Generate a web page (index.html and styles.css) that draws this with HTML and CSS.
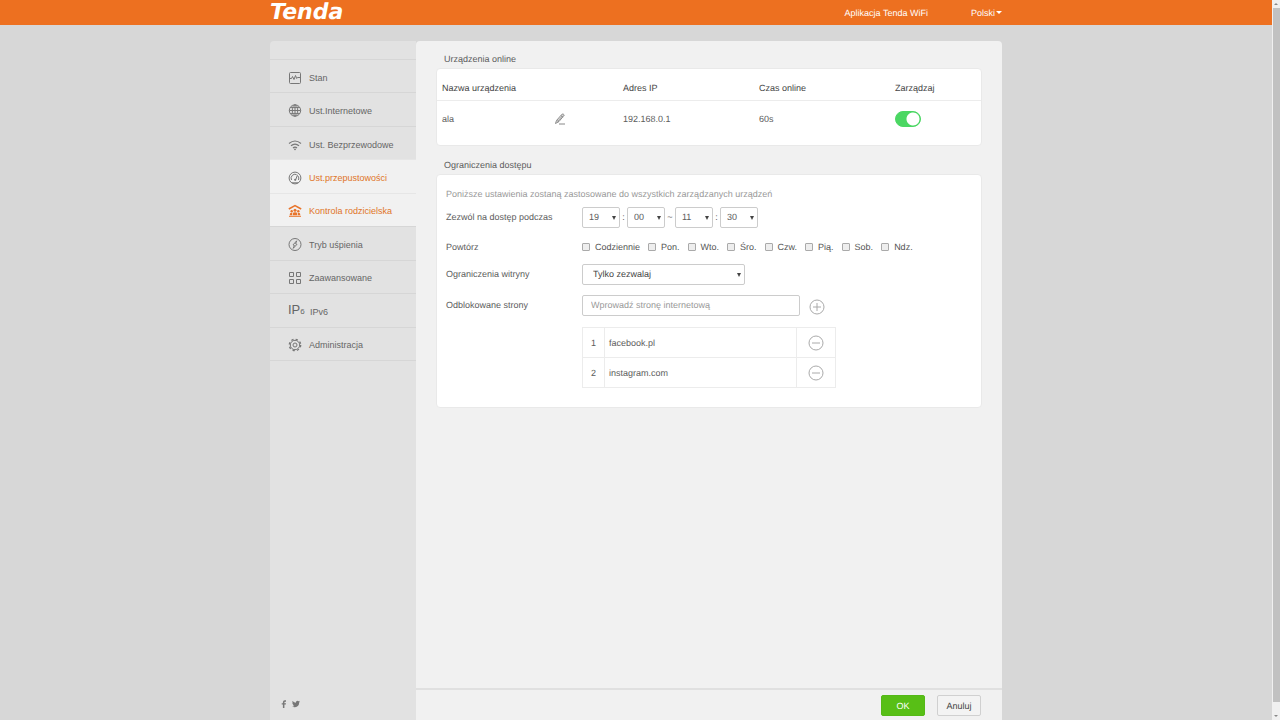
FILE: index.html
```html
<!DOCTYPE html>
<html lang="pl">
<head>
<meta charset="utf-8">
<title>Tenda – Kontrola rodzicielska</title>
<link rel="stylesheet" href="styles.css">
</head>
<body>
<div class="page">
  <header class="topbar">
    <div class="wrap topbar-inner">
      <a class="logo" href="#">Tenda</a>
      <a class="top-link" href="#">Aplikacja Tenda WiFi</a>
      <button class="lang" type="button">Polski<span class="caret"></span></button>
    </div>
  </header>
  <div class="wrap shell">
    <aside class="sidebar">
      <nav class="menu">
        <a class="item" href="#"><svg class="icon" viewBox="0 0 14 14"><rect x="1.500" y="1.500" width="11" height="11" rx="1"/><path d="M1.500 7.500h2l1-2 1.500 3 1.500-4 1.200 3 .8-1h3"/></svg>Stan</a>
        <a class="item" href="#"><svg class="icon" viewBox="0 0 14 14"><circle cx="7" cy="6.500" r="5.700"/><ellipse cx="7" cy="6.500" rx="2.700" ry="5.700"/><path d="M7 .8v11.400M1.300 6.500h11.400M2.200 3.600h9.600M2.200 9.400h9.600"/></svg>Ust.Internetowe</a>
        <a class="item" href="#"><svg class="icon" viewBox="0 0 14 14"><path d="M1 5.500q6-5 12 0M3 7.800q4-3.400 8 0M5 10q2-1.800 4 0" stroke-width="1.200"/><circle class="solid" cx="7" cy="11.300" r=".9"/></svg>Ust. Bezprzewodowe</a>
        <a class="item active" href="#"><svg class="icon dim" viewBox="0 0 14 14"><path d="M4 11.800h6"/><circle cx="7" cy="7" r="5.900"/><path d="M3.500 9A4 4 0 0 1 8.500 3.500M10 5a4 4 0 0 1 .5 4"/><path d="M9.500 3.800 7.800 8.500"/><circle class="solid" cx="7.200" cy="8.800" r="1.100"/></svg>Ust.przepustowości</a>
        <a class="item active" href="#"><svg class="icon" viewBox="0 0 14 14"><path d="M.8 5 7 1.700 13.200 5" stroke-width="1.500"/><g class="solid"><circle cx="7" cy="6.300" r="1.500"/><circle cx="3.700" cy="7.300" r="1.200"/><circle cx="10.300" cy="7.300" r="1.200"/><path d="M4.900 11.200V9.500q0-1.300 2.100-1.300t2.100 1.300v1.700zM1.800 11.200V9.900q0-1.100 2.400-1.100v2.400zM12.200 11.200V9.900q0-1.100-2.400-1.100v2.400z"/></g><path d="M1 12.300h12"/></svg>Kontrola rodzicielska</a>
        <a class="item" href="#"><svg class="icon" viewBox="0 0 14 14"><circle cx="7" cy="6.500" r="6"/><path d="M8.700 2.800 5 6.900l1.400.5-1.200 3L9 6.300l-1.400-.5z"/></svg>Tryb uśpienia</a>
        <a class="item" href="#"><svg class="icon" viewBox="0 0 14 14"><path d="M1.500 1.500h4v4h-4zM8.500 1.500h4v4h-4zM1.500 8.500h4v4h-4zM8.500 8.500h4v4h-4z"/></svg>Zaawansowane</a>
        <a class="item" href="#"><span class="ip-icon">IP<small>6</small></span>IPv6</a>
        <a class="item" href="#"><svg class="icon" viewBox="0 0 14 14"><circle cx="7" cy="7" r="2"/><circle cx="7" cy="7" r="4.700"/><circle cx="7" cy="7" r="5.700" stroke-width="1.300" stroke-dasharray="2.240 2.240"/></svg>Administracja</a>
      </nav>
      <div class="social">
        <a href="#" aria-label="Facebook"><svg viewBox="0 0 8 8"><path d="M6 .3v1.500H5q-.6 0-.6.600v.9H6L5.800 4.600H4.400V8H2.900V4.600H1.700V3.300h1.200V2.200Q2.900.3 4.800.3z"/></svg></a>
        <a href="#" aria-label="Twitter"><svg viewBox="0 0 8 8"><path d="M8 1.600l-.8.8Q7.200 5 5.500 6.300 3 8 0 6.600q1.400 0 2.300-.7Q1.200 5.700.9 4.700h.6Q.3 4.200.3 3l.6.200Q-.1 2.300.6 1.100 2 2.800 3.900 2.800 3.800.8 5.500.700q.8 0 1.200.5l1-.4-.6.9z"/></svg></a>
      </div>
    </aside>
    <main class="content">
      <div class="panels">
        <h2 class="title">Urządzenia online</h2>
        <section class="card">
          <table class="devices">
            <thead><tr><th class="name-col">Nazwa urządzenia</th><th class="mid-col">Adres IP</th><th class="mid-col">Czas online</th><th>Zarządzaj</th></tr></thead>
            <tbody><tr>
              <td><div class="device">ala<button class="edit" type="button" aria-label="Edytuj"><svg viewBox="0 0 12 12"><path d="M1.500 10.500 2.500 7.500 8 1.200q1.200-.7 2.300.8L5 8.500 1.500 10.500zM7 2.500l2.100 1.800M2.700 7.500l2.100 1.300M3.800 8 8.700 2.600M5 11h6"/></svg></button></div></td>
              <td>192.168.0.1</td><td>60s</td>
              <td><input class="switch" type="checkbox" checked aria-label="Zarządzaj"></td>
            </tr></tbody>
          </table>
        </section>
        <h2 class="title second">Ograniczenia dostępu</h2>
        <section class="card limits">
          <p class="note">Poniższe ustawienia zostaną zastosowane do wszystkich zarządzanych urządzeń</p>
          <div class="row time-row">
            <label class="label" for="h1">Zezwól na dostęp podczas</label>
            <div class="times">
              <span class="select"><select id="h1"><option>19</option></select></span><span class="sep">:</span>
              <span class="select"><select aria-label="Minuta od"><option>00</option></select></span><span class="sep wide">~</span>
              <span class="select"><select aria-label="Godzina do"><option>11</option></select></span><span class="sep">:</span>
              <span class="select"><select aria-label="Minuta do"><option>30</option></select></span>
            </div>
          </div>
          <div class="row repeat-row">
            <span class="label">Powtórz</span>
            <div class="days">
              <label><input type="checkbox">Codziennie</label>
              <label><input type="checkbox">Pon.</label>
              <label><input type="checkbox">Wto.</label>
              <label><input type="checkbox">Śro.</label>
              <label><input type="checkbox">Czw.</label>
              <label><input type="checkbox">Pią.</label>
              <label><input type="checkbox">Sob.</label>
              <label><input type="checkbox">Ndz.</label>
            </div>
          </div>
          <div class="row">
            <label class="label" for="mode">Ograniczenia witryny</label>
            <span class="select mode"><select id="mode"><option>Tylko zezwalaj</option></select></span>
          </div>
          <div class="row">
            <label class="label" for="site">Odblokowane strony</label>
            <input class="site" id="site" type="text" placeholder="Wprowadź stronę internetową">
            <button class="round add" type="button" aria-label="Dodaj"><svg viewBox="0 0 16 16"><circle cx="8" cy="8" r="7"/><path d="M4 8h8M8 4v8"/></svg></button>
          </div>
          <table class="sites">
            <tr><td class="num">1</td><td>facebook.pl</td><td class="act"><button class="round" type="button" aria-label="Usuń"><svg viewBox="0 0 16 16"><circle cx="8" cy="8" r="7"/><path d="M4 8h8"/></svg></button></td></tr>
            <tr><td class="num">2</td><td>instagram.com</td><td class="act"><button class="round" type="button" aria-label="Usuń"><svg viewBox="0 0 16 16"><circle cx="8" cy="8" r="7"/><path d="M4 8h8"/></svg></button></td></tr>
          </table>
        </section>
      </div>
      <footer class="actions">
        <button class="btn ok" type="button">OK</button>
        <button class="btn" type="button">Anuluj</button>
      </footer>
    </main>
  </div>
</div>
<div class="scrollbar"><span class="arrow up"></span><span class="thumb"></span><span class="arrow down"></span></div>
</body>
</html>
```
FILE: styles.css
```css
* { box-sizing: border-box; }
body {
  margin: 0;
  min-height: 100vh;
  display: flex;
  background: #d7d7d7;
  color: #5c5c5c;
  font: 9px/12px "Liberation Sans", Arial, sans-serif;
  text-rendering: geometricPrecision;
}
a { color: inherit; text-decoration: none; }
button, input, select { font: inherit; color: inherit; margin: 0; text-rendering: inherit; }
button { padding: 0; border: 0; background: none; }
svg { display: block; fill: none; stroke: currentColor; }

.page { flex: 1; display: flex; flex-direction: column; }
.wrap { width: 100%; max-width: 732px; margin: 0 auto; }
.topbar { background: #ed7020; color: #fff; }
.topbar-inner { display: flex; align-items: center; height: 25px; }
.logo { margin-right: auto; font: italic bold 22px/25px "DejaVu Sans", sans-serif; }
.top-link { margin-right: 43px; }
.lang { display: flex; align-items: center; gap: 1px; }
.caret { border: 3px solid transparent; border-top-color: #fff; border-bottom: 0; }

.shell { flex: 1; display: flex; margin-top: 16px; }
.sidebar {
  width: 146px;
  padding-top: 18px;
  display: flex;
  flex-direction: column;
  justify-content: space-between;
  background: #e2e2e2;
  border-radius: 4px 0 0 0;
}
.menu { display: flex; flex-direction: column; height: 302px; border-bottom: 1px solid #d6d6d6; }
.item {
  flex: 1;
  display: flex;
  align-items: center;
  gap: 7px;
  padding: 3px 0 0 18px;
  border-top: 1px solid #d6d6d6;
  color: #666;
  text-rendering: auto;
}
.active { background: #f1f1f1; color: #e07428; border-top-color: #e6e6e6; }
.icon { width: 14px; height: 14px; stroke-width: 1; color: #777; }
.active .icon { color: #e9742a; }
.active .dim { color: #777; }
.solid { fill: currentColor; stroke: none; }
.ip-icon { width: 15px; font-size: 13px; line-height: 14px; white-space: nowrap; margin-bottom: 2px; }
.ip-icon small { font-size: 8px; }
.social { display: flex; gap: 4px; padding: 0 0 12px 10px; color: #777; }
.social svg { width: 8px; height: 8px; fill: currentColor; stroke: none; }

.content { flex: 1; display: flex; flex-direction: column; background: #f1f1f1; border-radius: 4px 4px 0 0; }
.panels { flex: 1; padding: 12px 20px; }
.title { margin: 0 8px 3px; font-size: 9px; font-weight: normal; line-height: 12px; }
.second { margin-top: 13px; }
.card { background: #fff; border: 1px solid #e9e9e9; border-radius: 4px; }

.devices { width: 100%; border-collapse: collapse; table-layout: fixed; margin-bottom: 7px; }
.devices th { height: 31px; padding: 8px 0 0; text-align: left; font-weight: normal; color: #444; border-bottom: 1px solid #ececec; }
.devices td { height: 38px; padding: 0; }
.devices th:first-child, .devices td:first-child { padding-left: 5px; }
.name-col { width: 186px; }
.mid-col { width: 136px; }
.device { display: flex; align-items: center; justify-content: space-between; padding-right: 57px; }
.edit { color: #888; }
.edit svg { width: 12px; height: 12px; }
.switch {
  appearance: none;
  display: block;
  width: 26px;
  height: 16px;
  border: 1px solid #4bd763;
  border-radius: 8px;
  background: radial-gradient(circle at 17px 7px, #fff 6px, #4bd763 7px);
}

.limits { padding: 13px 9px 19px; }
.note { margin: 0 0 6px; color: #999; }
.row { display: flex; align-items: center; min-height: 22px; margin-bottom: 9px; }
.label { width: 136px; }
.time-row { margin-bottom: 8px; }
.repeat-row { margin-bottom: 5px; }
.times, .days { display: flex; align-items: center; }
.days { gap: 8px; color: #555; }
.days label { display: flex; align-items: center; gap: 5px; }
.days input { appearance: none; width: 8px; height: 8px; border: 1px solid #aaa; border-radius: 1px; background: #eee; }
.select { position: relative; display: flex; width: 38px; }
.select::after {
  content: "";
  position: absolute;
  right: 4px;
  top: 9px;
  border: 2px solid transparent;
  border-top: 4px solid #444;
  border-bottom: 0;
  pointer-events: none;
}
.select select {
  appearance: none;
  width: 100%;
  height: 21px;
  padding: 0 6px;
  border: 1px solid #ccc;
  border-radius: 2px;
  background: #fff;
}
.select.mode { width: 163px; }
.mode select { padding: 0 10px; color: #444; }
.sep { width: 7px; text-align: center; }
.wide { width: 10px; }
.site { width: 218px; height: 21px; padding: 0 8px; border: 1px solid #ccc; border-radius: 2px; background: #fff; }
.site::placeholder { color: #999; }
.round { display: block; color: #aaa; }
.round svg { width: 16px; height: 16px; }
.add { margin: 4px 0 0 9px; }
.sites { width: 254px; margin: 11px 0 0 136px; border-collapse: collapse; }
.sites td { height: 30px; padding: 0 0 0 4px; border: 1px solid #ececec; }
.sites .num { width: 22px; padding: 0; text-align: center; }
.sites .act { width: 39px; padding: 0 11px; }

.actions { display: flex; justify-content: flex-end; gap: 12px; padding: 5px 21px 4px; border-top: 2px solid #e0e0e0; }
.btn { width: 44px; height: 21px; border: 1px solid #d0d0d0; border-radius: 2px; background: #f3f3f3; color: #444; }
.ok { border-color: #55b917; background: #58bf16; color: #fff; }

.scrollbar { width: 8px; display: flex; flex-direction: column; align-items: center; gap: 3px; padding: 3px 0; background: #f0f0f0; }
.thumb { flex: 1; width: 7px; background: #c1c1c1; max-height: calc(100% - 20px); }
.arrow { border: 2px solid transparent; }
.up { border-bottom-color: #888; border-top: 0; }
.down { border-top-color: #888; border-bottom: 0; margin-top: auto; }
```
